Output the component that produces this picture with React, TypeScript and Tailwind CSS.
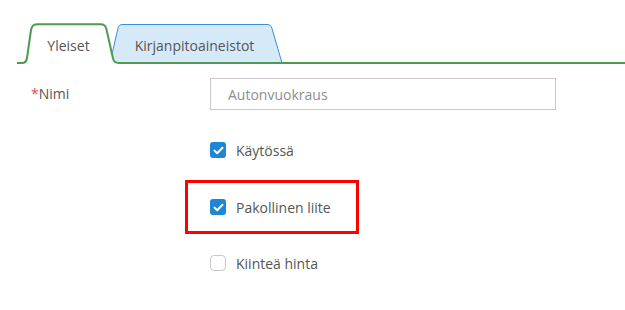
import React from "react";

function Check({ checked }: { checked: boolean }) {
  if (checked) {
    return (
      <span className="flex h-[16px] w-[16px] items-center justify-center rounded-[3px] bg-[#1f86d6]">
        <svg width="11" height="9" viewBox="0 0 11 9" fill="none">
          <path d="M1.5 4.6 L4.2 7.2 L9.5 1.8" stroke="#ffffff" strokeWidth="2" strokeLinecap="round" strokeLinejoin="round" />
        </svg>
      </span>
    );
  }
  return <span className="block h-[16px] w-[16px] rounded-[4px] border border-[#c9c9c9] bg-white" />;
}

export default function App() {
  return (
    <div className="h-[310px] w-[625px] bg-white pt-[22px] text-[14px] text-[#555555]" style={{ fontFamily: '"Open Sans", "Noto Sans", sans-serif' }}>
      {/* Tabs */}
      <div className="ml-[17px] flex h-[42px] items-end">
        <div className="relative z-10 flex h-[42px] w-[102px] shrink-0 items-center justify-center pt-[4px]">
          <svg className="absolute inset-0" width="102" height="42" viewBox="0 0 102 42" fill="none">
            <path d="M0 41 H5 C8 41 9.5 39.5 10 36 L14 8 C15 3.5 16.5 2.3 21 2.3 H83 C87.5 2.3 88.5 3.5 89.5 7.5 L96 36.5 C97 40 98 41 102 41 V42 H0 Z" fill="#ffffff" />
            <path d="M0 41 H5 C8 41 9.5 39.5 10 36 L14 8 C15 3.5 16.5 2.3 21 2.3 H83 C87.5 2.3 88.5 3.5 89.5 7.5 L96 36.5 C97 40 98 41 102 41" stroke="#4e9a4f" strokeWidth="2" />
          </svg>
          <span className="relative ml-[1px]">Yleiset</span>
        </div>
        <div className="relative ml-[-9px] flex h-[42px] w-[173px] shrink-0 items-center justify-center pt-[4px]">
          <svg className="absolute inset-0" width="173" height="42" viewBox="0 0 173 42" fill="none">
            <path d="M0 41 L8 6 C9 3 10 2.5 13 2.5 H157 C160 2.5 161 3.5 162 6.5 L172 41 Z" fill="#d6e9f9" />
            <path d="M0 41 L8 6 C9 3 10 2.5 13 2.5 H157 C160 2.5 161 3.5 162 6.5 L172 41" stroke="#3b8fd9" strokeWidth="1" />
            <path d="M0 41 H173" stroke="#4e9a4f" strokeWidth="2" />
          </svg>
          <span className="relative ml-[-4px]">Kirjanpitoaineistot</span>
        </div>
        <div className="h-[2px] flex-1 bg-[#4e9a4f]" />
      </div>

      {/* Form */}
      <div className="pl-[31px] pt-[14px]">
        <div className="flex items-center">
          <div className="w-[179px] leading-none">
            <span className="text-[#e0485c]">*</span>
            <span>Nimi</span>
          </div>
          <div className="flex h-[32px] w-[346px] items-center border border-[#c9c9c9] pl-[17px] text-[#8e8e8e]">
            Autonvuokraus
          </div>
        </div>

        <div className="ml-[179px] mt-[32px] flex flex-col">
          <div className="flex h-[16px] items-center gap-[10px]">
            <Check checked />
            <span>Käytössä</span>
          </div>
          <div className="relative mt-[41px] flex h-[16px] items-center gap-[10px]">
            <div className="absolute left-[-25px] top-[-19px] h-[54px] w-[174px] border-[3px] border-[#ff0000]" />
            <Check checked />
            <span>Pakollinen liite</span>
          </div>
          <div className="mt-[40px] flex h-[16px] items-center gap-[10px]">
            <Check checked={false} />
            <span>Kiinteä hinta</span>
          </div>
        </div>
      </div>
    </div>
  );
}
